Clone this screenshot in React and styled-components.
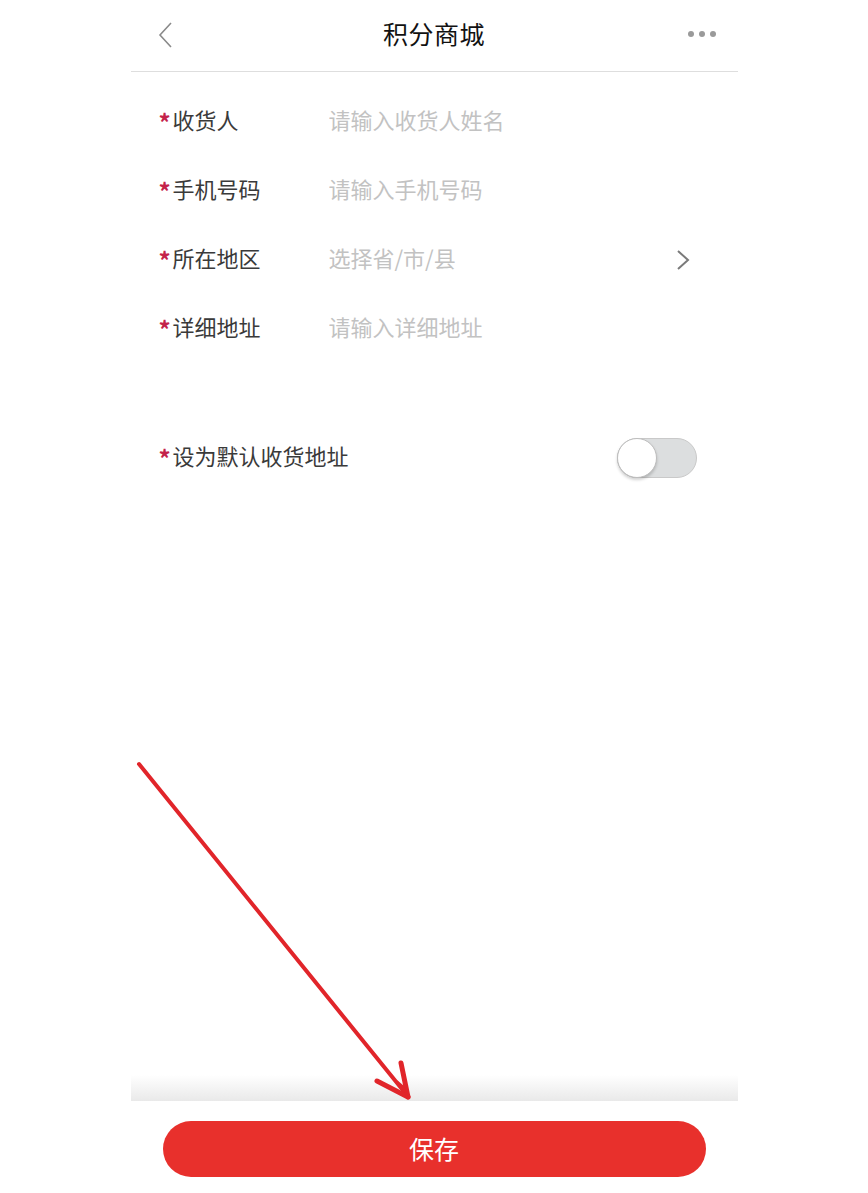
import React from 'react'
import styled, { createGlobalStyle } from 'styled-components'

const GlobalStyle = createGlobalStyle`
    html, body {
        margin: 0;
        padding: 0;
        background: #fff;
    }
    body {
        font-family: "Noto Sans CJK SC", "Noto Sans", sans-serif;
    }
`

const fields = [
    { label: '收货人', placeholder: '请输入收货人姓名' },
    { label: '手机号码', placeholder: '请输入手机号码' },
    { label: '所在地区', placeholder: '选择省/市/县', arrow: true },
    { label: '详细地址', placeholder: '请输入详细地址' },
]

const App = () => {
    return (
        <>
            <GlobalStyle />
            <Page>
                <Phone>
                    <Header>
                        <BackButton>
                            <svg width="16" height="28" viewBox="0 0 16 28">
                                <path d="M13 2 L2 14 L13 26" fill="none" stroke="#8a8a8a" strokeWidth="1.6" />
                            </svg>
                        </BackButton>
                        <Title>积分商城</Title>
                        <MoreButton>
                            <Dot />
                            <Dot />
                            <Dot />
                        </MoreButton>
                    </Header>

                    <Form>
                        {fields.map((f) => (
                            <FieldRow key={f.label}>
                                <Label>
                                    <Star>*</Star>
                                    {f.label}
                                </Label>
                                <Input placeholder={f.placeholder} readOnly={f.arrow} />
                                {f.arrow && (
                                    <svg width="14" height="22" viewBox="0 0 14 22">
                                        <path d="M2 2 L12 11 L2 20" fill="none" stroke="#7a7a7a" strokeWidth="2" />
                                    </svg>
                                )}
                            </FieldRow>
                        ))}
                    </Form>

                    <SwitchRow>
                        <Label>
                            <Star>*</Star>
                            设为默认收货地址
                        </Label>
                        <Switch>
                            <Knob />
                        </Switch>
                    </SwitchRow>

                    <Spacer />

                    <Fade />
                    <Footer>
                        <SaveButton>保存</SaveButton>
                    </Footer>
                </Phone>

                {/* red annotation arrow drawn over the screenshot */}
                <ArrowLayer width="868" height="1193" viewBox="0 0 868 1193">
                    <g stroke="#e1252a" strokeLinecap="round" fill="none">
                        <line x1="139" y1="764" x2="406" y2="1094" strokeWidth="4" />
                        <line x1="408" y1="1097" x2="377" y2="1081" strokeWidth="5" />
                        <line x1="408" y1="1097" x2="401" y2="1063" strokeWidth="5" />
                    </g>
                    <path d="M397 1080 L409 1099 L404 1086 Z" fill="#e1252a" />
                </ArrowLayer>
            </Page>
        </>
    )
}

export default App

const Page = styled.div`
    position: relative;
    width: 868px;
    min-height: 1193px;
    margin: 0 auto;
`
const Phone = styled.div`
    width: 607px;
    min-height: 1193px;
    margin: 0 auto;
    display: flex;
    flex-direction: column;
    background: #fff;
`
const Header = styled.div`
    height: 71px;
    border-bottom: 1px solid #dedede;
    display: flex;
    align-items: center;
    justify-content: space-between;
    padding: 0 21px 0 27px;
`
const BackButton = styled.div`
    width: 60px;
    display: flex;
    align-items: center;
    padding-bottom: 2px;
`
const Title = styled.div`
    font-size: 25px;
    color: #111;
    letter-spacing: 0.5px;
    margin-bottom: 5px;
`
const MoreButton = styled.div`
    width: 66px;
    display: flex;
    justify-content: flex-end;
    gap: 5px;
    padding-bottom: 4px;
`
const Dot = styled.span`
    width: 6px;
    height: 6px;
    border-radius: 50%;
    background: #9a9a9a;
`
const Form = styled.div`
    padding: 15px 48px 0 28px;
`
const FieldRow = styled.div`
    height: 69px;
    display: flex;
    align-items: center;
`
const Label = styled.div`
    width: 170px;
    flex-shrink: 0;
    font-size: 22px;
    color: #3a3a3a;
    white-space: nowrap;
    margin-bottom: 6px;
`
const Star = styled.span`
    display: inline-block;
    width: 14px;
    color: #c4224a;
    font-size: 24px;
    font-weight: 700;
    line-height: 22px;
    vertical-align: top;
    margin-top: 8px;
`
const Input = styled.input`
    flex: 1;
    min-width: 0;
    border: none;
    outline: none;
    padding: 0;
    margin: 0 0 6px;
    background: transparent;
    font-family: "Noto Sans CJK SC", "Noto Sans", sans-serif;
    font-size: 22px;
    color: #333;

    &::placeholder {
        color: #c2c2c2;
    }
`
const SwitchRow = styled.div`
    height: 60px;
    margin-top: 65px;
    padding: 0 41px 0 28px;
    display: flex;
    align-items: center;
    justify-content: space-between;
`
const Switch = styled.div`
    width: 80px;
    height: 40px;
    box-sizing: border-box;
    border-radius: 20px;
    background: #dcdedf;
    border: 1px solid #c9c9c9;
    position: relative;
`
const Knob = styled.div`
    position: absolute;
    left: -1px;
    top: -1px;
    width: 40px;
    height: 40px;
    box-sizing: border-box;
    border-radius: 50%;
    background: #fff;
    border: 1px solid #bdbdbd;
    box-shadow: 0 2px 3px rgba(0, 0, 0, 0.18);
`
const Spacer = styled.div`
    flex: 1;
`
const Fade = styled.div`
    height: 26px;
    background: linear-gradient(to bottom, rgba(255, 255, 255, 0), #e9e9e9);
`
const Footer = styled.div`
    padding: 20px 32px 16px;
`
const SaveButton = styled.button`
    width: 100%;
    height: 56px;
    border: none;
    border-radius: 28px;
    background: #e8302c;
    color: #fff;
    font-family: "Noto Sans CJK SC", "Noto Sans", sans-serif;
    font-size: 25px;
    padding-bottom: 4px;
    cursor: pointer;
`
const ArrowLayer = styled.svg`
    position: absolute;
    left: 0;
    top: 0;
    pointer-events: none;
`
